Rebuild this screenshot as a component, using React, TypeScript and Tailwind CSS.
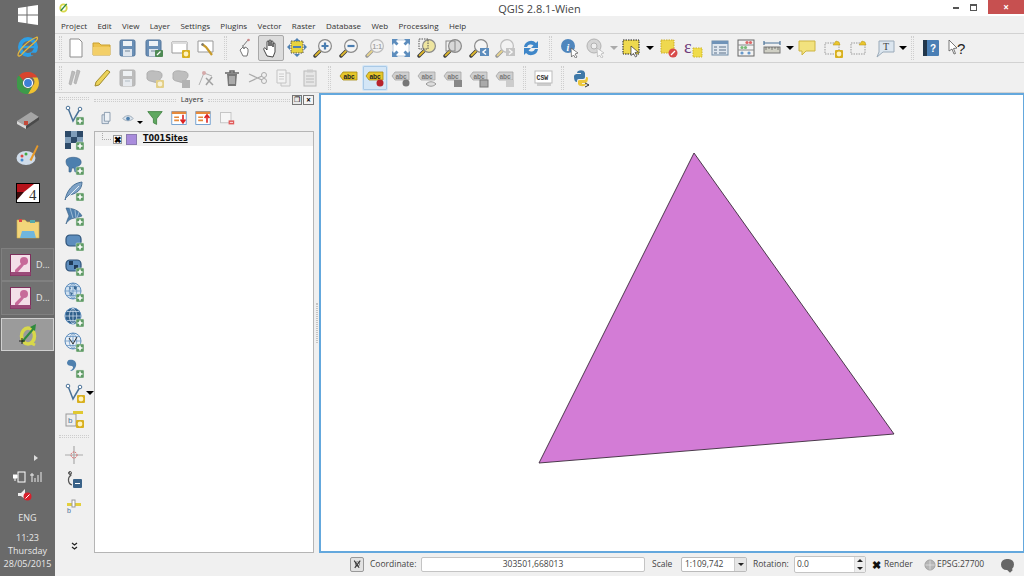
import React from 'react';

type Kids = { children?: React.ReactNode };

const I = ({ children, size = 20, dim = false }: Kids & { size?: number; dim?: boolean }) => (
  <svg width={size} height={size} viewBox="0 0 20 20" className={`shrink-0 ${dim ? 'opacity-50' : ''}`}>
    {children}
  </svg>
);

// small badges used on lots of the QGIS icons
const Plus = () => (
  <g>
    <rect x="12" y="12" width="8" height="8" rx="1" fill="#5f9a66" stroke="#d5e5d5" strokeWidth="0.5" />
    <path d="M16 13.5v5M13.5 16h5" stroke="#fff" strokeWidth="1.6" />
  </g>
);
const Star = () => (
  <g>
    <rect x="12" y="12" width="8" height="8" rx="1" fill="#d8b020" />
    <circle cx="16" cy="16" r="2.4" fill="#fff3c0" />
  </g>
);

const Mag = ({ children, fill = '#f4f4f4', dim = false }: Kids & { fill?: string; dim?: boolean }) => (
  <I dim={dim}>
    <path d="M7.5 12.5L2 18" stroke="#3d3d3d" strokeWidth="3.4" strokeLinecap="round" />
    <path d="M7 13L2.6 17.4" stroke="#e0b92c" strokeWidth="1.8" strokeLinecap="round" />
    <circle cx="12" cy="8" r="6.4" fill={fill} stroke="#8a8a8a" strokeWidth="1.2" />
    {children}
  </I>
);

const Arrows = () => (
  <g fill="#5d8dbd">
    <path d="M1 1h6L5 3l2.5 2.5-2 2L3 5 1 7zM19 1v6l-2-2-2.5 2.5-2-2L15 3l-2-2zM1 19v-6l2 2 2.5-2.5 2 2L5 17l2 2zM19 19h-6l2-2-2.5-2.5 2-2L17 15l2-2z" />
  </g>
);

const Floppy = ({ children, dim = false }: Kids & { dim?: boolean }) => (
  <I dim={dim}>
    <rect x="2" y="2" width="15" height="16" rx="1.5" fill={dim ? '#8a8a8a' : '#6a8fb6'} stroke={dim ? '#777' : '#52749a'} />
    <rect x="5" y="3" width="9" height="5" fill="#eef2f6" />
    <rect x="5" y="11" width="9" height="7" fill="#dfe6ee" />
    <rect x="7" y="12.5" width="5" height="1" fill="#789" />
    {children}
  </I>
);

const Cloud = ({ children, dim = false, fill = '#8e8e8e' }: Kids & { dim?: boolean; fill?: string }) => (
  <I dim={dim}>
    <path d="M3 6c0-3 4-3.5 7-3s8 0 8 4-2 3-2 5-3 3-6 2-7-1-7-4 0-2 0-4z" fill={fill} stroke="#6a6a6a" />
    {children}
  </I>
);

const Abc = ({ badge, dim = true }: { badge?: React.ReactNode; dim?: boolean }) => (
  <I>
    <path d="M1 8l3-4h14v8H4z" fill={dim ? '#cfcfcf' : '#e6c62a'} stroke={dim ? '#a5a5a5' : '#a68b12'} strokeWidth="0.8" />
    <text x="4.5" y="10.5" fontSize="6.5" fontWeight="700" fontFamily="'Liberation Sans', sans-serif" fill={dim ? '#777' : '#222'}>
      abc
    </text>
    {badge}
  </I>
);

const Dash = ({ children, fill = 'none' }: Kids & { fill?: string }) => (
  <I>
    <rect x="2" y="5" width="14" height="11" fill={fill} stroke="#9a9a9a" strokeDasharray="1.5 1" />
    <path d="M10 7l3-4 3 1 1 3z" fill="#eac52c" stroke="#b09218" strokeWidth="0.5" />
    {children}
  </I>
);

const Globe = ({ dark = false, light = false }: { dark?: boolean; light?: boolean }) => (
  <I>
    <circle cx="9" cy="9" r="8" fill={dark ? '#2f5f8a' : light ? '#e6eef6' : '#cfe0ef'} stroke="#5d8dbd" />
    <path d="M1 9h16M9 1v16M3 4.5h12M3 13.5h12M9 1c-5 4-5 12 0 16M9 1c5 4 5 12 0 16" stroke={dark ? '#d5e3f0' : '#5d8dbd'} strokeWidth="0.7" fill="none" />
    {!dark && !light && <path d="M5 5l2 1-1 2zM10 4l3 1-1 3-2-1zM6 10l3 1-2 3z" fill="#3b6a95" />}
    {light && <path d="M5 6l4 6 4-7" stroke="#333" fill="none" strokeWidth="1" />}
    <Plus />
  </I>
);

const Slot = ({ children, active = false, blue = false }: Kids & { active?: boolean; blue?: boolean }) => (
  <div
    className={`flex h-[26px] w-[26px] shrink-0 items-center justify-center rounded-[2px] ${
      active ? 'border border-[#a8a8a8] bg-[#dcdcdc]' : ''
    } ${blue ? 'bg-[#d4e6f6] outline outline-1 -outline-offset-2 outline-[#a9c9e6]' : ''}`}
  >
    {children}
  </div>
);

const Arrow = ({ w = 'w-[9px]' }: { w?: string }) => (
  <div className={`flex shrink-0 items-center justify-center ${w}`}>
    <div className="h-0 w-0 border-x-[4px] border-t-[4px] border-x-transparent border-t-black" />
  </div>
);

const Grip = ({ w = 'w-[12px]' }: { w?: string }) => (
  <div className={`flex h-full shrink-0 items-center justify-center ${w}`}>
    <div className="h-[24px] w-[3px] border-x border-dotted border-[#cfcfcf]" />
  </div>
);

const menus = ['Project', 'Edit', 'View', 'Layer', 'Settings', 'Plugins', 'Vector', 'Raster', 'Database', 'Web', 'Processing', 'Help'];

const TopTools = () => (
  <div className="flex h-[30px] shrink-0 items-center border-y border-[#d2d2d2] pl-[3px]">
    <Grip w="w-[5px]" />
    <Slot>
      <I><path d="M4 1h9l3 3v15H4z" fill="#fff" stroke="#8d8d8d" /></I>
    </Slot>
    <Slot>
      <I>
        <path d="M1 5h6l2 2h9v10H1z" fill="#edc34f" stroke="#c9a02f" />
        <path d="M1 9h17v8H1z" fill="#f3cf68" />
      </I>
    </Slot>
    <Slot><Floppy /></Slot>
    <Slot>
      <Floppy>
        <rect x="11" y="12" width="8" height="7" rx="1" fill="#4f8a55" />
        <path d="M13 17l3.5-3.5" stroke="#fff" strokeWidth="1.2" />
      </Floppy>
    </Slot>
    <Slot>
      <I>
        <path d="M2 4h15v11H2z" fill="#fff" stroke="#999" />
        <path d="M2 4h15v2H2z" fill="#ddd" />
        <Star />
      </I>
    </Slot>
    <Slot>
      <I>
        <path d="M2 3h15v11H2z" fill="#fff" stroke="#999" />
        <path d="M6 6l4 3 6 8" stroke="#c79a2b" strokeWidth="2.2" fill="none" />
        <path d="M6 5l2 1-1 2-2-1z" fill="#777" />
      </I>
    </Slot>
    <Grip w="w-[13px]" />
    <Slot>
      <I>
        <path d="M8 8l5-6" stroke="#777" strokeWidth="1" />
        <circle cx="13.500" cy="2" r="1.300" fill="#c88" />
        <circle cx="8" cy="8" r="1.100" fill="#999" />
        <path d="M5 12l3-3 1 2 1-2 2 1 1 1v3l-1 4H8z" fill="#fff" stroke="#666" strokeWidth="0.9" />
      </I>
    </Slot>
    <Slot active>
      <I>
        <path d="M6 18l-3-6c-1-2 1-3 2-1l1 1V4c0-1.500 2-1.500 2 0v4-5c0-1.500 2-1.500 2 0v5-4c0-1.500 2-1.500 2 0v5-3c0-1.500 2-1.500 2 0v8l-2 5z" fill="#fff" stroke="#333" strokeWidth="0.9" />
      </I>
    </Slot>
    <Slot>
      <I>
        <rect x="4" y="3" width="12" height="12" fill="#e8d33f" stroke="#555" strokeDasharray="1.5 1" />
        <path d="M10 0l3 3H7zM10 19l3-3H7zM0 9l3-3v6zM20 9l-3-3v6z" fill="#4f80b0" />
        <path d="M6 8h8v2H6z" fill="#4f80b0" />
      </I>
    </Slot>
    <Slot><Mag><path d="M8.500 8h7M12 4.500v7" stroke="#4a7db0" strokeWidth="2.2" /></Mag></Slot>
    <Slot><Mag><path d="M8.500 8h7" stroke="#4a7db0" strokeWidth="2.2" /></Mag></Slot>
    <Slot>
      <Mag dim>
        <text x="7.500" y="10.500" fontSize="6.500" fontWeight="700" fontFamily="'Liberation Sans', sans-serif" fill="#555">1:1</text>
      </Mag>
    </Slot>
    <Slot><I><rect x="2" y="2" width="16" height="16" fill="#fff" stroke="#bcd" /><Arrows /></I></Slot>
    <Slot>
      <Mag fill="#eee5a0">
        <rect x="2" y="1" width="9" height="10" fill="none" stroke="#555" strokeDasharray="1.500 1" />
      </Mag>
    </Slot>
    <Slot><Mag fill="#d8d8d8"><rect x="3" y="3" width="9" height="10" fill="none" stroke="#888" /></Mag></Slot>
    <Slot>
      <Mag><path d="M20 10v8h-9v-8z" fill="#5d8dbd" /><path d="M17 11.500l-3 2.500 3 2.500" stroke="#fff" strokeWidth="1.500" fill="none" /></Mag>
    </Slot>
    <Slot>
      <Mag dim><path d="M20 10v8h-9v-8z" fill="#999" /><path d="M14 11.500l3 2.500-3 2.500" stroke="#fff" strokeWidth="1.500" fill="none" /></Mag>
    </Slot>
    <Slot>
      <I>
        <path d="M3 9a7 7 0 0 1 12-4l2-2v7h-7l2.500-2.500A4 4 0 0 0 6 9z" fill="#3f87c9" />
        <path d="M17 11a7 7 0 0 1-12 4l-2 2v-7h7l-2.500 2.500A4 4 0 0 0 14 11z" fill="#3f87c9" />
      </I>
    </Slot>
    <Grip w="w-[13px]" />
    <Slot>
      <I>
        <circle cx="8" cy="8" r="7" fill="#4f86bd" />
        <text x="6.500" y="12.500" fontSize="10" fontStyle="italic" fontWeight="700" fontFamily="'Liberation Serif', serif" fill="#fff">i</text>
        <path d="M11 10l7 5-3 1 2 3-1.500 1-2-3-2 2z" fill="#fff" stroke="#555" strokeWidth="0.7" />
      </I>
    </Slot>
    <Slot>
      <I dim>
        <circle cx="8" cy="8" r="7" fill="#bbb" stroke="#777" />
        <circle cx="8" cy="8" r="3" fill="#eee" stroke="#777" />
        <path d="M11 10l7 5-3 1 2 3-1.500 1-2-3-2 2z" fill="#fff" stroke="#777" strokeWidth="0.7" />
      </I>
    </Slot>
    <div className="flex w-[9px] shrink-0 items-center justify-center">
      <div className="h-0 w-0 border-x-[4px] border-t-[4px] border-x-transparent border-t-[#aaa]" />
    </div>
    <Slot>
      <I>
        <rect x="2" y="2" width="16" height="14" fill="#eed94e" stroke="#222" strokeDasharray="1.500 1" />
        <path d="M10 8l7 6-3 .5 2 3.500-1.500 1-2-3.500-2.500 2z" fill="#fff" stroke="#333" strokeWidth="0.7" />
      </I>
    </Slot>
    <Arrow w="w-[11px]" />
    <Slot>
      <I>
        <rect x="3" y="2" width="13" height="13" fill="#efd84f" stroke="#c9ad2b" strokeDasharray="1.500 1" />
        <circle cx="15" cy="15" r="4.500" fill="#d84b4b" />
        <path d="M13 17l4-4" stroke="#fff" strokeWidth="1.200" />
      </I>
    </Slot>
    <Slot>
      <I>
        <text x="0" y="15" fontSize="18" fontFamily="'Liberation Serif', serif" fill="#6d3b7a">ε</text>
        <rect x="9" y="10" width="9" height="9" fill="#f0dc4a" stroke="#cdb52a" strokeDasharray="1.500 1" />
      </I>
    </Slot>
    <Slot>
      <I>
        <rect x="2" y="3" width="16" height="14" fill="#dfe7ef" stroke="#6f8ba6" />
        <path d="M2 3h16v3H2z" fill="#6f93b8" />
        <path d="M4 9h3M9 9h7M4 12h3M9 12h7M4 15h3M9 15h7" stroke="#5b7189" />
      </I>
    </Slot>
    <Slot>
      <I>
        <rect x="2" y="2" width="16" height="16" fill="#f3f3f3" stroke="#666" />
        <path d="M2 7h16M2 12h16" stroke="#888" />
        <circle cx="11" cy="4.500" r="1.600" fill="#d66" />
        <circle cx="14.500" cy="4.500" r="1.600" fill="#d66" />
        <circle cx="6" cy="9.500" r="1.600" fill="#7b7" />
        <circle cx="9.500" cy="9.500" r="1.600" fill="#7b7" />
        <circle cx="6" cy="15" r="1.600" fill="#69c" />
        <circle cx="13" cy="15" r="1.600" fill="#69c" />
      </I>
    </Slot>
    <Slot>
      <I>
        <path d="M2 5h16M2 3v4M18 3v4" stroke="#4a7298" strokeWidth="1.200" />
        <rect x="2" y="9" width="16" height="6" fill="#cfcfc4" stroke="#777" />
        <path d="M4 9v3M7 9v2M10 9v3M13 9v2M16 9v3" stroke="#555" strokeWidth="0.7" />
      </I>
    </Slot>
    <Arrow />
    <Slot>
      <I>
        <path d="M2 3h16v10H9l-4 4v-4H2z" fill="#f2e27e" stroke="#cdb442" strokeLinejoin="round" />
      </I>
    </Slot>
    <Slot><Dash><Star /></Dash></Slot>
    <Slot><Dash /></Slot>
    <Slot>
      <I>
        <path d="M4 3h15v11H8l-6 5 2-5z" fill="#dce6ef" stroke="#9aaab9" />
        <text x="8" y="12" fontSize="10" fontFamily="'Liberation Serif', serif" fill="#444">T</text>
      </I>
    </Slot>
    <Arrow />
    <Grip w="w-[11px]" />
    <Slot>
      <I>
        <rect x="2" y="2" width="16" height="16" rx="1" fill="#4a7fb5" />
        <rect x="2" y="2" width="4" height="16" fill="#22364a" />
        <text x="9" y="14" fontSize="10" fontWeight="700" fontFamily="'Liberation Sans', sans-serif" fill="#fff">?</text>
      </I>
    </Slot>
    <Slot>
      <I>
        <path d="M2 2l8 8-3.500.5 2 5-1.500.5-2-5-3 2z" fill="#fff" stroke="#555" strokeWidth="0.8" />
        <text x="10" y="16" fontSize="15" fontFamily="'Liberation Sans', sans-serif" fill="#222">?</text>
      </I>
    </Slot>
  </div>
);

const SecondTools = () => (
  <div className="flex h-[30px] shrink-0 items-center border-b border-[#d2d2d2] pl-[3px]">
    <Grip w="w-[5px]" />
    <Slot>
      <I dim>
        <path d="M6 3l3 1-4 13-2-1zM11 2l3 1-4 13-2-1z" fill="#888" stroke="#666" strokeWidth="0.7" />
      </I>
    </Slot>
    <Slot>
      <I>
        <path d="M15 2l3 2L7 17l-4 1 1-4z" fill="#ecd35a" stroke="#a08a2c" />
      </I>
    </Slot>
    <Slot><Floppy dim /></Slot>
    <Slot><Cloud dim><Star /></Cloud></Slot>
    <Slot><Cloud dim><rect x="12" y="12" width="8" height="8" fill="#777" /></Cloud></Slot>
    <Slot>
      <I dim>
        <path d="M3 17L8 5l8 3" stroke="#777" fill="none" />
        <circle cx="8" cy="5" r="2" fill="#b66" />
        <path d="M10 10l7 7M16 9l-6 8" stroke="#555" strokeWidth="1.500" />
      </I>
    </Slot>
    <Slot>
      <I>
        <path d="M3 5h14M8 5V3h4v2" stroke="#666" strokeWidth="1.500" fill="none" />
        <path d="M5 6h10l-1 12H6z" fill="#777" />
        <path d="M8 8v8M10 8v8M12 8v8" stroke="#ddd" />
      </I>
    </Slot>
    <Slot>
      <I dim>
        <path d="M1 6l13 6M1 14l13-6" stroke="#666" strokeWidth="1.200" />
        <circle cx="16" cy="13" r="2.500" fill="none" stroke="#666" />
        <circle cx="16" cy="7" r="2.500" fill="none" stroke="#666" />
      </I>
    </Slot>
    <Slot>
      <I dim>
        <path d="M7 5h9v13H7z" fill="#eee" stroke="#999" />
        <path d="M3 2h9v13H3z" fill="#f7f7f7" stroke="#999" />
        <path d="M5 6h5M5 8.500h5M5 11h5" stroke="#aaa" />
      </I>
    </Slot>
    <Slot>
      <I dim>
        <rect x="4" y="3" width="12" height="15" fill="#ddd" stroke="#888" />
        <rect x="7" y="1.500" width="6" height="3" fill="#aaa" />
        <path d="M6 8h8M6 11h8M6 14h8" stroke="#888" />
      </I>
    </Slot>
    <Grip w="w-[13px]" />
    <Slot><Abc dim={false} /></Slot>
    <Slot blue>
      <Abc dim={false} badge={<circle cx="15" cy="15" r="3.500" fill="#b8232c" />} />
    </Slot>
    <Slot><Abc badge={<circle cx="15" cy="15" r="3.500" fill="#777" />} /></Slot>
    <Slot><Abc badge={<path d="M9 16c3-3 7-3 10 0-3 3-7 3-10 0z" fill="#ddd" stroke="#777" strokeWidth="0.7" />} /></Slot>
    <Slot><Abc badge={<rect x="11" y="12" width="8" height="7" fill="#888" />} /></Slot>
    <Slot><Abc badge={<rect x="11" y="12" width="8" height="7" fill="#aaa" stroke="#777" />} /></Slot>
    <Slot><Abc badge={<rect x="11" y="12" width="8" height="7" fill="#ccc" />} /></Slot>
    <Grip w="w-[13px]" />
    <Slot>
      <I>
        <rect x="3" y="6" width="14" height="12" fill="#ccc" />
        <rect x="1" y="3" width="17" height="12" fill="#fff" stroke="#bbb" />
        <text x="2.500" y="11.500" fontSize="6.500" fontWeight="700" fontFamily="'Liberation Mono', monospace" fill="#333">CSW</text>
      </I>
    </Slot>
    <Grip w="w-[11px]" />
    <Slot>
      <I>
        <path d="M3 9c0-3 2-3 4-3h3V5H6c0-3 7-4 8 0v4c0 2-2 2-3 2H8c-2 0-2 1-2 3-2 0-3-2-3-5z" fill="#3f79a8" />
        <path d="M17 10c0 3-1 5-3 5h-3v1h4c0 3-7 3-8 0v-3c0-1 1-1 3-1h3c2 0 2-2 2-3 1 0 2 0 2 1z" fill="#ecc83c" />
        <path d="M14 15l4 2-4 2" stroke="#333" fill="none" />
      </I>
    </Slot>
  </div>
);

const HDots = ({ w = 'w-full' }: { w?: string }) => (
  <div className={`h-[3px] border-y border-dotted border-[#cdcdcd] ${w}`} />
);

const VSlot = ({ children }: Kids) => (
  <div className="flex h-[25.3px] shrink-0 items-center justify-center">{children}</div>
);

const LeftTools = () => (
  <div className="flex w-[39px] shrink-0 flex-col items-center pr-[1px]">
    <HDots w="w-[30px] mt-[4px] mb-[2px]" />
    <VSlot><I><path d="M4 3l5 13 7-12" fill="none" stroke="#4a7298" strokeWidth="1.500" /><circle cx="4" cy="3" r="1.800" fill="#fff" stroke="#4a7298" /><circle cx="16" cy="4" r="1.800" fill="#fff" stroke="#4a7298" /><Plus /></I></VSlot>
    <VSlot>
      <I>
        <path d="M1 1h6v6H1zM13 1h6v6h-6zM7 7h6v6H7zM1 13h6v6H1z" fill="#2d4a68" />
        <path d="M7 1h6v6H7zM1 7h6v6H1zM13 7h6v6h-6z" fill="#7f9db9" />
        <Plus />
      </I>
    </VSlot>
    <VSlot>
      <I>
        <path d="M2 6c0-5 14-5 15 0 1 4-3 5-4 6v5h-2l-1-4H8l-1 4H5v-5C3 11 2 9 2 6z" fill="#4d7fae" stroke="#3a6288" strokeWidth="0.6" />
        <Plus />
      </I>
    </VSlot>
    <VSlot><I><path d="M1 19C3 9 9 2 18 1c0 8-6 12-13 13z" fill="#7fa3c7" stroke="#4a7298" /><path d="M2 18L15 5" stroke="#fff" strokeWidth="0.8" /><Plus /></I></VSlot>
    <VSlot><I><path d="M2 2c6 0 13 2 16 8l-6 2c-4 0-8 2-10 6 1-4 2-6 3-8z" fill="#4f80ae" stroke="#335b80" strokeWidth="0.6" /><path d="M6 2l3 10M11 4l1 8M15 6l-2 6" stroke="#cfe0ef" strokeWidth="0.6" /><Plus /></I></VSlot>
    <VSlot><I><rect x="2" y="4" width="15" height="11" rx="4" fill="#5d8dbd" stroke="#2f5378" strokeWidth="1.200" /><Plus /></I></VSlot>
    <VSlot>
      <I>
        <rect x="2" y="4" width="15" height="11" rx="4" fill="#5d8dbd" stroke="#2f5378" strokeWidth="1.200" />
        <path d="M5 5h4v4H5zM10 9h4v4h-4z" fill="#1f3a58" />
        <Plus />
      </I>
    </VSlot>
    <VSlot><Globe /></VSlot>
    <VSlot><Globe dark /></VSlot>
    <VSlot><Globe light /></VSlot>
    <VSlot><I><path d="M5 2c5-1 8 2 7 6-1 3-3 5-6 5 3-2 4-4 2-5-3 0-5-1-5-3 0-1 1-3 2-3z" fill="#4f80ae" /><Plus /></I></VSlot>
    <VSlot>
      <div className="flex items-center pl-[11px]">
        <I>
          <path d="M3 3l5 13 7-12" fill="none" stroke="#4a7298" strokeWidth="1.500" />
          <circle cx="3" cy="3" r="1.800" fill="#fff" stroke="#4a7298" />
          <circle cx="15" cy="4" r="1.800" fill="#fff" stroke="#4a7298" />
          <Star />
        </I>
        <Arrow />
      </div>
    </VSlot>
    <VSlot>
      <I>
        <rect x="2" y="6" width="10" height="12" fill="#eee" stroke="#999" />
        <path d="M9 3h10v3H9z" fill="#e0c832" />
        <text x="4" y="15" fontSize="8" fontFamily="'Liberation Sans', sans-serif" fill="#4a7298">b</text>
        <Star />
      </I>
    </VSlot>
    <HDots w="w-[30px] my-[4px]" />
    <VSlot>
      <I>
        <path d="M10 1v18M1 10h18" stroke="#aaa" strokeWidth="1.200" />
        <circle cx="10" cy="10" r="3" fill="none" stroke="#d65a5a" strokeDasharray="1.500 1" />
      </I>
    </VSlot>
    <VSlot>
      <I>
        <path d="M5 2l2 3c-4 3-3 9 1 10" stroke="#555" strokeWidth="1.200" fill="none" />
        <circle cx="6" cy="3" r="1.500" fill="none" stroke="#555" />
        <rect x="9" y="9" width="9" height="9" rx="1" fill="#3a6288" />
        <path d="M11 13.500h5" stroke="#fff" />
      </I>
    </VSlot>
    <VSlot>
      <I>
        <path d="M3 8h14v3H3z" fill="#e3cf3c" />
        <rect x="8" y="5" width="3" height="7" fill="#fff" stroke="#999" />
        <text x="3" y="18" fontSize="7" fontFamily="'Liberation Sans', sans-serif" fill="#4a7298">b</text>
      </I>
    </VSlot>
    <svg width="7" height="8" viewBox="0 0 7 8" className="mt-[24px]">
      <path d="M1 1l2.500 2L6 1M1 5l2.500 2L6 5" fill="none" stroke="#222" strokeWidth="1.300" />
    </svg>
  </div>
);

const LayersPanel = () => (
  <div className="flex w-[220px] shrink-0 flex-col">
    <div className="flex h-[14px] shrink-0 items-center">
      <HDots w="flex-1" />
      <span className="px-[5px] text-[7.500px] leading-none text-[#333]">Layers</span>
      <HDots w="flex-1" />
      <div className="ml-[2px] h-[10px] w-[10px] border border-[#777] bg-[#e8e8e8] text-center text-[7px] leading-[8px]">❐</div>
      <div className="ml-[1px] flex h-[10px] w-[11px] items-center justify-center border border-[#777] bg-[#f4f4f4] text-[8px] font-bold leading-none">×</div>
    </div>
    <div className="flex h-[24px] shrink-0 items-center gap-[8px] pb-[2px] pl-[4px]">
      <I size={16}>
        <path d="M5 6h8v11H5z" fill="#dfe6ee" stroke="#7a8ea3" />
        <path d="M8 3h7v11H8z" fill="#eef2f6" stroke="#7a8ea3" />
      </I>
      <div className="flex w-[17px] shrink-0 items-center">
        <I size={15}>
          <path d="M1 10c4-5 10-5 14 0-4 4-10 4-14 0z" fill="#dbe5ee" stroke="#8a9aaa" />
          <circle cx="8" cy="10" r="2.500" fill="#4f80ae" />
        </I>
        <div className="mt-[8px] h-0 w-0 shrink-0 border-x-[3px] border-t-[3px] border-x-transparent border-t-black" />
      </div>
      <I size={16}><path d="M1 2h18l-7 9v7l-4-2v-5z" fill="#5fa860" stroke="#3d7f3f" /></I>
      <I size={16}>
        <rect x="1" y="2" width="18" height="16" fill="#fff" stroke="#5a90c8" />
        <path d="M1 2h18v3H1zM4 8h6v2H4zM4 12h6v2H4z" fill="#e68a3c" />
        <path d="M15 6v8M12 12l3 4 3-4" stroke="#d22" strokeWidth="2" fill="none" />
      </I>
      <I size={16}>
        <rect x="1" y="2" width="18" height="16" fill="#fff" stroke="#5a90c8" />
        <path d="M1 2h18v3H1zM4 8h6v2H4zM4 12h6v2H4z" fill="#e68a3c" />
        <path d="M15 16V8M12 10l3-4 3 4" stroke="#d22" strokeWidth="2" fill="none" />
      </I>
      <I size={16}>
        <rect x="2" y="3" width="13" height="13" fill="#f6f6f6" stroke="#bbb" />
        <rect x="12" y="13" width="7" height="5" fill="#e05a5a" />
        <path d="M13.500 15.500h4" stroke="#fff" />
      </I>
    </div>
    <div className="flex-1 border border-[#b5b5b5] bg-white">
      <div className="flex h-[14px] items-center bg-[#f0f0f0] pl-[7px]">
        <div className="h-[7px] w-[9px] -translate-y-[3px] border-b border-l border-dotted border-[#aaa]" />
        <div className="ml-[2px] flex h-[9px] w-[9px] items-center justify-center border border-[#999] bg-white text-[9px] font-bold leading-none">✖</div>
        <div className="ml-[4px] h-[11px] w-[11px] border border-[#8a7ab0] bg-[#a98cdc]" />
        <span className="ml-[6px] font-['DejaVu_Sans',sans-serif] text-[8px] font-bold leading-none text-[#111] underline">T001Sites</span>
      </div>
    </div>
  </div>
);

const MapCanvas = () => (
  <div className="flex-1 border-2 border-r-[1px] border-[#64a8dd] bg-white">
    <svg className="block h-full w-full" viewBox="321 95 702 456" preserveAspectRatio="none">
      <polygon points="694,153 894,434 539,463" fill="#d37cd6" stroke="#3a2a3a" strokeWidth="0.9" />
    </svg>
  </div>
);

const StatusBar = () => (
  <div className="flex h-[23px] shrink-0 items-center text-[8.500px] text-[#444]">
    <div className="ml-[295px] flex h-[15px] w-[14px] items-center justify-center rounded-[2px] border border-[#999] bg-[#e2e2e2]">
      <I size={11}><path d="M4 3l9 13M15 3L5 16" stroke="#333" strokeWidth="2" /><circle cx="10" cy="9" r="4" fill="none" stroke="#333" /></I>
    </div>
    <span className="ml-[6px] w-[51px]">Coordinate:</span>
    <div className="flex h-[15px] w-[224px] items-center justify-center rounded-[2px] border border-[#c4c4c4] bg-white">303501,668013</div>
    <span className="ml-[7px] w-[29px]">Scale</span>
    <div className="flex h-[15px] w-[66px] items-center justify-between rounded-[2px] border border-[#bbb] bg-white pl-[3px]">
      1:109,742
      <div className="flex h-full w-[12px] items-center justify-center border-l border-[#ccc] bg-[#e6e6e6]">
        <div className="h-0 w-0 border-x-[3px] border-t-[3px] border-x-transparent border-t-[#222]" />
      </div>
    </div>
    <span className="ml-[6px] w-[41px]">Rotation:</span>
    <div className="flex h-[17px] w-[72px] items-center justify-between rounded-[2px] border border-[#c4c4c4] bg-white pl-[2px]">
      0.0
      <div className="flex h-full w-[11px] flex-col items-center justify-around border-l border-[#ddd] bg-[#eee]">
        <div className="h-0 w-0 border-x-[3px] border-b-[3px] border-x-transparent border-b-[#222]" />
        <div className="h-0 w-0 border-x-[3px] border-t-[3px] border-x-transparent border-t-[#222]" />
      </div>
    </div>
    <div className="ml-[5px] flex h-[10px] w-[10px] items-center justify-center text-[11px] font-bold leading-none text-[#111]">✖</div>
    <span className="ml-[3px] w-[40px]">Render</span>
    <I size={12}>
      <circle cx="10" cy="10" r="8.500" fill="#b5b5b5" stroke="#888" />
      <path d="M2 10h16M10 2v16" stroke="#eee" />
    </I>
    <span className="ml-[1px]">EPSG:27700</span>
    <div className="relative ml-[17px] h-[11px] w-[13px] rounded-full bg-[#666]">
      <div className="absolute -bottom-[2px] left-[7px] h-[4px] w-[4px] rotate-45 bg-[#666]" />
    </div>
  </div>
);

const TaskbarApp = ({ children, h }: Kids & { h: string }) => (
  <div className={`flex shrink-0 items-center justify-center ${h}`}>{children}</div>
);

const AccessKey = () => (
  <svg width="21" height="22" viewBox="0 0 21 22">
    <rect x="0.500" y="0.500" width="20" height="21" fill="#f3dfe8" stroke="#7d2f5c" />
    <rect x="0.500" y="18" width="20" height="3.500" fill="#9a4a78" />
    <circle cx="14" cy="7" r="4" fill="#c76a9a" />
    <path d="M12 9L5 16v2h3l6-7z" fill="#c76a9a" />
  </svg>
);

const Taskbar = () => (
  <div className="flex w-[55px] shrink-0 flex-col bg-[#6a6a6a] text-[#e8e8e8]">
    <TaskbarApp h="h-[30px]">
      <svg width="20" height="20" viewBox="0 0 20 20">
        <path d="M0 3l8.500-1.200v7.700H0zM9.500 1.600L20 0v9.500H9.500zM0 10.500h8.500v7.700L0 17zM9.500 10.500H20V20L9.500 18.400z" fill="#fff" />
      </svg>
    </TaskbarApp>
    <TaskbarApp h="h-[34px]">
      <svg width="24" height="24" viewBox="0 0 24 24">
        <circle cx="12" cy="12" r="8" fill="none" stroke="#2e9fe6" strokeWidth="4" />
        <path d="M6 12h13" stroke="#2e9fe6" strokeWidth="2.500" />
        <path d="M15 19h5" stroke="#6a6a6a" strokeWidth="2.500" />
        <path d="M21 2c3 3-8 9-14 16-2 3-5 4-5 2 0-3 7-13 19-18z" fill="none" stroke="#e8b83a" strokeWidth="1.200" />
      </svg>
    </TaskbarApp>
    <TaskbarApp h="h-[38px]">
      <svg width="22" height="22" viewBox="0 0 22 22">
        <path d="M11 0a11 11 0 0 1 9.500 5.500H11a5.500 5.500 0 0 0-5 3L2 3.500A11 11 0 0 1 11 0z" fill="#d8442f" />
        <path d="M20.500 5.500A11 11 0 0 1 11 22l4.500-8A5.500 5.500 0 0 0 15.500 5.500z" fill="#f0c230" />
        <path d="M2 3.500l4 5a5.500 5.500 0 0 0 9.500 5.500L11 22A11 11 0 0 1 2 3.500z" fill="#3d9a4a" />
        <circle cx="11" cy="11" r="4.500" fill="#3f7fd6" stroke="#fff" strokeWidth="1.200" />
      </svg>
    </TaskbarApp>
    <TaskbarApp h="h-[36px]">
      <svg width="24" height="20" viewBox="0 0 24 20">
        <path d="M1 11L15 2l8 5-13 9z" fill="#a5a5a5" />
        <path d="M1 11l9 5v3l-9-5z" fill="#d8d8d8" />
        <path d="M10 16l13-9v3L10 19z" fill="#4a4a4a" />
        <rect x="8" y="11" width="4" height="4" fill="#c34a3a" />
      </svg>
    </TaskbarApp>
    <TaskbarApp h="h-[36px]">
      <svg width="24" height="24" viewBox="0 0 24 24">
        <ellipse cx="10" cy="14" rx="9.500" ry="7" fill="#cfdcea" />
        <circle cx="6" cy="12" r="1.500" fill="#d44" />
        <circle cx="10" cy="10" r="1.500" fill="#4a4" />
        <circle cx="6" cy="16" r="1.500" fill="#48c" />
        <path d="M21 1l1.500 1-7 15-2-1z" fill="#e89a2a" />
      </svg>
    </TaskbarApp>
    <TaskbarApp h="h-[37px]">
      <svg width="24" height="20" viewBox="0 0 24 20">
        <rect x="0.500" y="0.500" width="23" height="19" fill="#fff" stroke="#000" />
        <path d="M1 1h17L8 9H1z" fill="#b5121b" />
        <path d="M1 9h7l-7 8z" fill="#3a0a0a" />
        <text x="13" y="17" fontSize="15" fontFamily="'Liberation Serif', serif" fill="#333">4</text>
      </svg>
    </TaskbarApp>
    <TaskbarApp h="h-[34px]">
      <svg width="24" height="22" viewBox="0 0 24 22">
        <path d="M1 3h8l2 2h12v16H1z" fill="#f2d57a" stroke="#cfae4c" strokeWidth="0.600" />
        <rect x="3" y="2" width="3" height="3" fill="#d44" />
        <rect x="14" y="3" width="5" height="3" fill="#5aa" />
        <path d="M6 14h12l2 7H4z" fill="#6fb6de" />
      </svg>
    </TaskbarApp>
    <div className="mx-[1px] mt-[3px] flex h-[33px] shrink-0 items-center gap-[5px] border border-[#808080] bg-[#727272] pl-[8px] text-[9px]">
      <AccessKey />D...
    </div>
    <div className="mx-[1px] flex h-[34px] shrink-0 items-center gap-[5px] border border-[#808080] bg-[#727272] pl-[8px] text-[9px]">
      <AccessKey />D...
    </div>
    <div className="mx-[1px] mt-[3px] flex h-[33px] shrink-0 items-center justify-center border border-[#d0d0d0] bg-[#9b9b9b]">
      <svg width="24" height="24" viewBox="0 0 24 24">
        <ellipse cx="12" cy="13" rx="6.500" ry="8" fill="none" stroke="#d8d84a" strokeWidth="3.500" />
        <path d="M15 20l4 2" stroke="#d8d84a" strokeWidth="3" />
        <path d="M6 19L18 5" stroke="#2f8a3d" strokeWidth="2" />
        <path d="M20 1l-1 7-5-4z" fill="#2f8a3d" />
        <path d="M3 18h6M6 15v6" stroke="#222" strokeWidth="1" />
      </svg>
    </div>
    <div className="mt-auto flex flex-col items-center pb-[6px]">
      <div className="mb-[10px] ml-[17px] h-0 w-0 border-y-[3px] border-l-[4px] border-y-transparent border-l-[#ddd]" />
      <div className="mb-[6px] flex items-center gap-[4px]">
        <svg width="13" height="12" viewBox="0 0 13 12">
          <rect x="5" y="1" width="7" height="10" fill="none" stroke="#fff" />
          <path d="M0 4h4v3H0zM2 7v3" stroke="#fff" fill="#fff" />
        </svg>
        <svg width="13" height="12" viewBox="0 0 13 12">
          <path d="M5 11V7M8 11V4M11 11V1" stroke="#aaa" strokeWidth="2" />
          <path d="M0 4h4M2 2v4M2 6v5" stroke="#eee" />
        </svg>
      </div>
      <div className="mb-[12px] mr-[5px]">
        <svg width="14" height="12" viewBox="0 0 14 12">
          <path d="M0 4h3l4-4v10L3 7H0z" fill="#eee" />
          <circle cx="9.500" cy="7.500" r="4" fill="#d8202c" />
          <path d="M7.500 9.500l4-4" stroke="#fff" />
        </svg>
      </div>
      <div className="mb-[8px] text-[9px] leading-[10px]">ENG</div>
      <div className="text-center text-[9px] leading-[13px]">
        <div>11:23</div>
        <div>Thursday</div>
        <div>28/05/2015</div>
      </div>
    </div>
  </div>
);

export default function App() {
  return (
    <div className="flex h-[576px] w-[1024px] overflow-hidden bg-[#f0f0f0] font-['Open_Sans',sans-serif]">
      <Taskbar />
      <div className="relative flex min-w-0 flex-1 flex-col">
        {/* blue edge of a window sitting above the screen */}
        <div className="absolute left-[197px] top-0 h-[2px] w-[518px] rounded-b-[2px] bg-[#5f9fd4]" />
        <div className="relative flex h-[16px] shrink-0 items-center justify-center bg-white">
          <div className="absolute left-[3px] top-[1px]">
            <svg width="11" height="13" viewBox="0 0 24 24">
              <ellipse cx="12" cy="13" rx="7" ry="8" fill="none" stroke="#d8d84a" strokeWidth="4" />
              <path d="M6 19L19 4" stroke="#2f8a3d" strokeWidth="3" />
            </svg>
          </div>
          <span className="text-[11px] leading-none text-[#444]">QGIS 2.8.1-Wien</span>
          <div className="absolute right-0 top-0 flex h-[14px] items-center">
            <div className="mr-[11px] mt-[2px] h-[2px] w-[6px] bg-[#555]" />
            <div className="mr-[11px] h-[7px] w-[7px] border border-t-2 border-[#555]" />
            <div className="flex h-[14px] w-[36px] items-center justify-center bg-[#c75050] text-[10px] font-bold leading-none text-white">×</div>
          </div>
        </div>
        <div className="flex h-[17px] shrink-0 items-center gap-[10.3px] pl-[6px] pt-[3px] text-[8px] leading-none text-[#333]">
          {menus.map(m => (
            <span key={m}>{m}</span>
          ))}
        </div>
        <TopTools />
        <SecondTools />
        <div className="flex min-h-0 flex-1">
          <LeftTools />
          <LayersPanel />
          <div className="flex w-[5px] shrink-0 items-center justify-center">
            <div className="h-[40px] w-[2px] border-x border-dotted border-[#c4c4c4]" />
          </div>
          <MapCanvas />
        </div>
        <StatusBar />
      </div>
    </div>
  );
}
